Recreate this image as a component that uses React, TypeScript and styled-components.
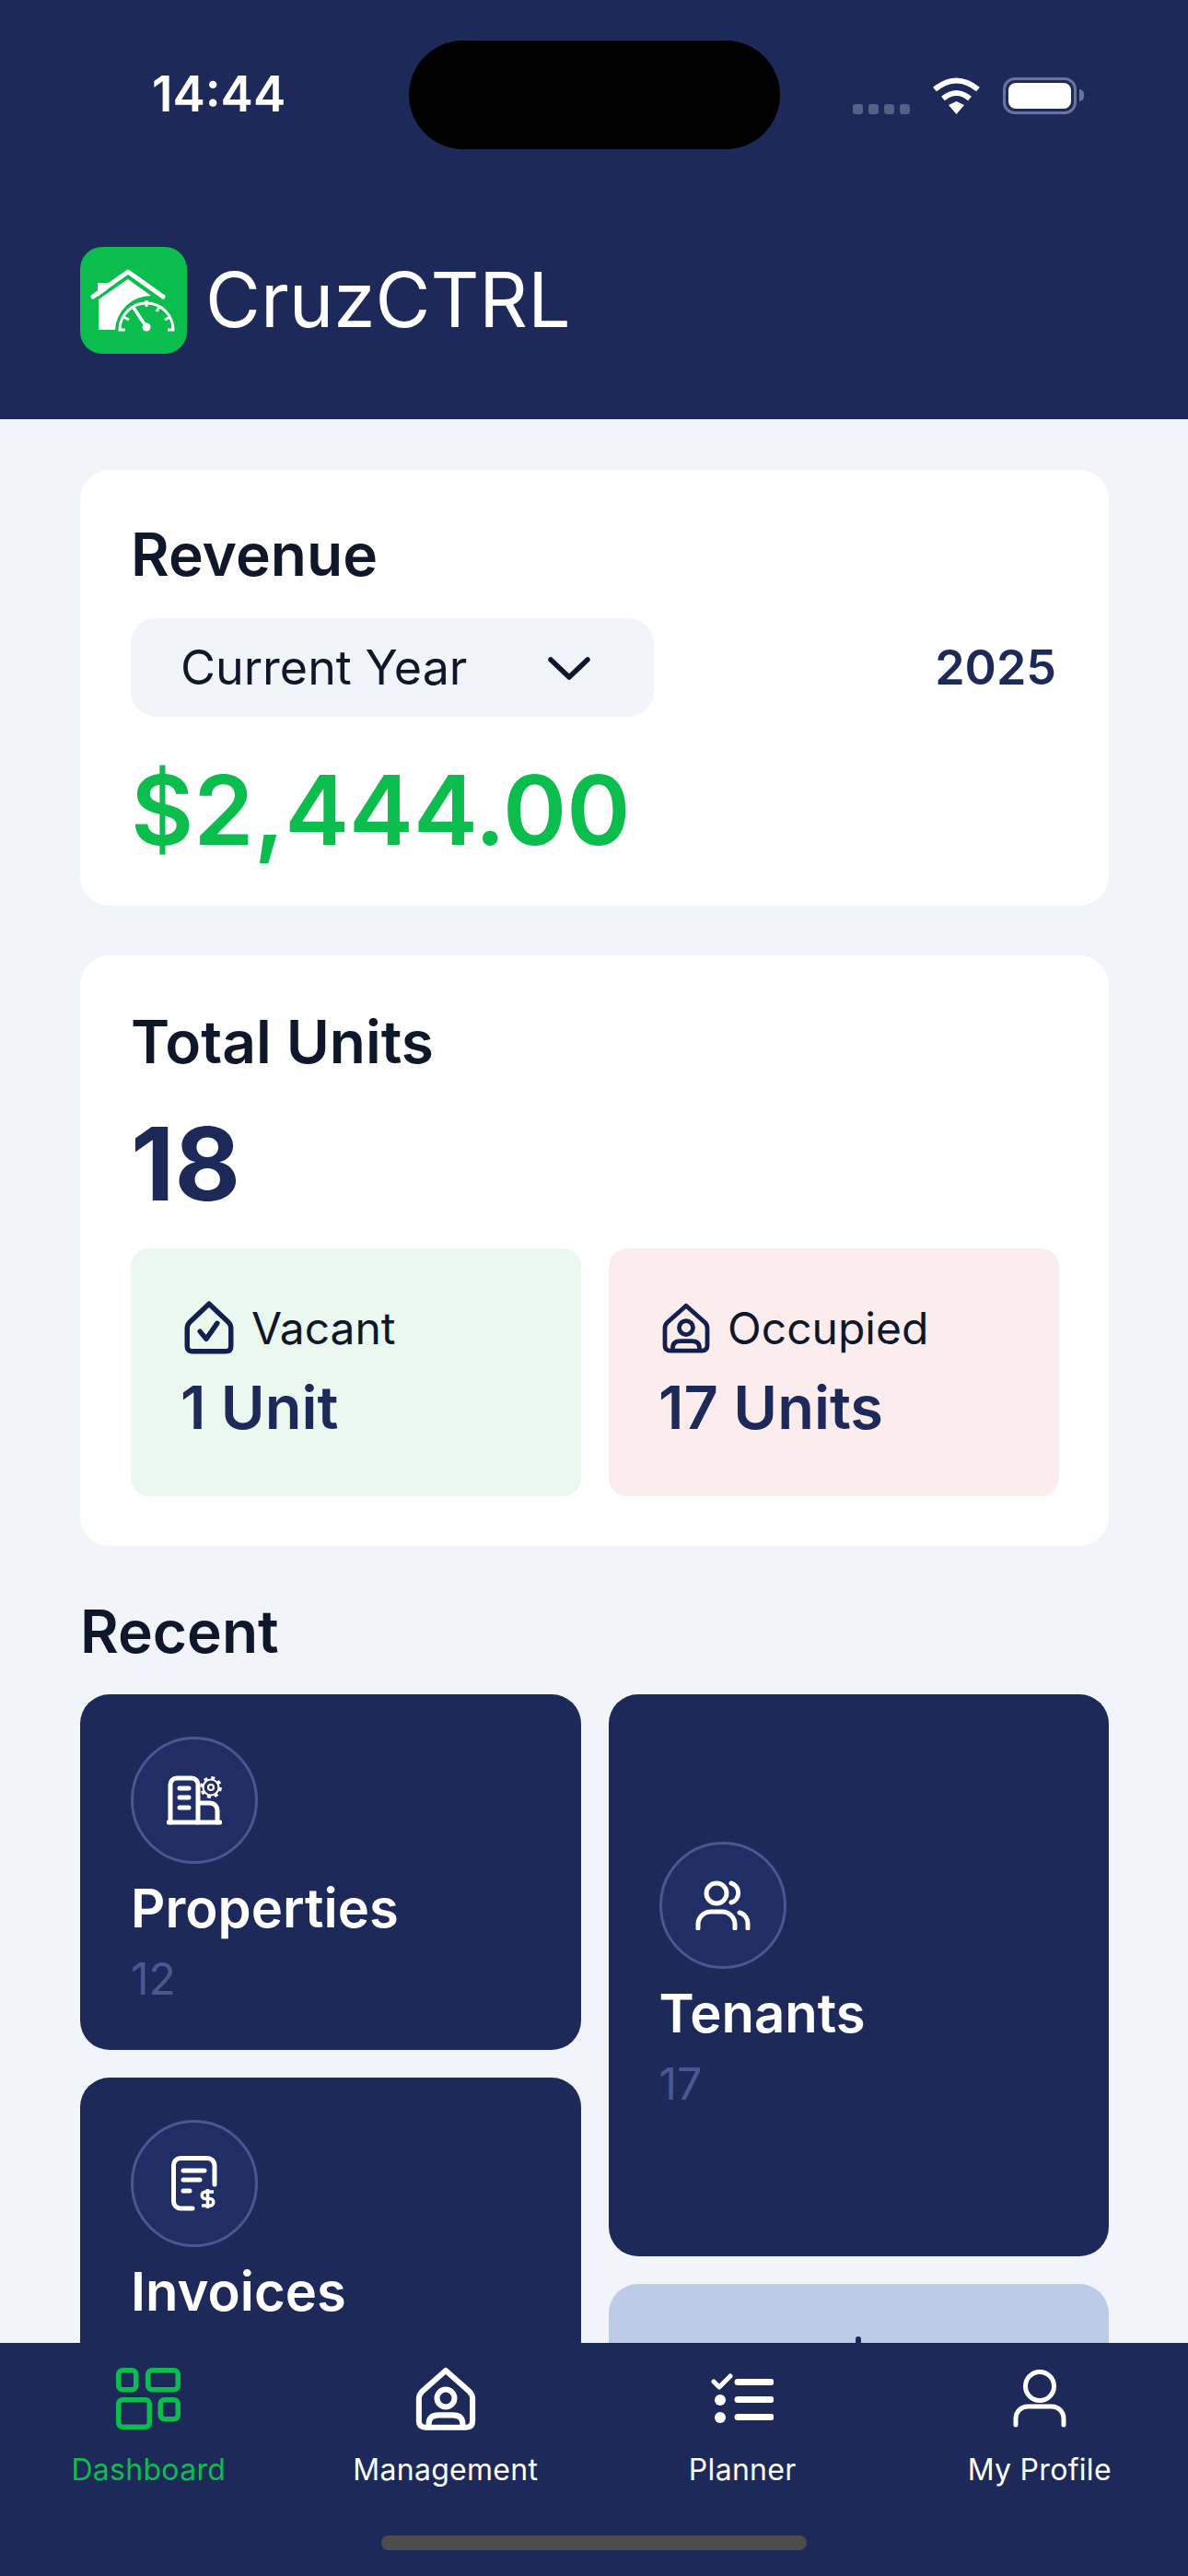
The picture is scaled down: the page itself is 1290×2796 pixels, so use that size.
import React from 'react'
import styled, { createGlobalStyle } from 'styled-components'

const navy = '#1d2959'
const ink = '#0f172a'
const green = '#0abd4c'

const HousePersonIcon: React.FC<{ size: number; color: string }> = ({ size, color }) => (
    <svg width={size} height={size} viewBox="0 0 24 24" fill="none" stroke={color} strokeWidth="1.9" strokeLinejoin="round" strokeLinecap="round">
        <path d="M12 2.5 L20.2 9.8 Q21.2 10.8 21.2 12.2 V19.8 Q21.2 22 18.8 22 H5.2 Q2.8 22 2.8 19.8 V12.2 Q2.8 10.8 3.8 9.8 Z" />
        <circle cx="12" cy="12" r="3" />
        <path d="M6.2 21.6 V20.8 Q6.2 17.8 9.6 17.8 H14.4 Q17.8 17.8 17.8 20.8 V21.6" />
    </svg>
)

const HouseCheckIcon: React.FC<{ size: number; color: string }> = ({ size, color }) => (
    <svg width={size} height={size} viewBox="0 0 24 24" fill="none" stroke={color} strokeWidth="2.1" strokeLinejoin="round" strokeLinecap="round">
        <path d="M12 2 L20.2 9.8 Q21.2 10.8 21.2 12.2 V19.8 Q21.2 22 18.8 22 H5.2 Q2.8 22 2.8 19.8 V12.2 Q2.8 10.8 3.8 9.8 Z" />
        <path d="M8.2 13.6 L10.8 16.8 L15.4 10.2" />
    </svg>
)

const LogoIcon = () => (
    <svg width="116" height="116" viewBox="0 0 116 116">
        <rect width="116" height="116" rx="24" fill={green} />
        <path d="M20 57 L52 35 L77 53 A39 39 0 0 0 38 90 H20 Z" fill="#fff" />
        <path d="M19 39 H30 V46 L19 54 Z" fill="#fff" />
        <path d="M14 54 L52 27 L90 54" fill="none" stroke="#fff" strokeWidth="5" strokeLinecap="round" strokeLinejoin="round" />
        <g fill="none" stroke="#fff" strokeWidth="3">
            <path d="M49 90 H43 A29 29 0 0 1 101 90 H95" />
            <path d="M72 58 V65 M87 64 L83 70 M98 76 L92 79 M47 76 L53 79" />
            <path d="M58 66 L72 87" strokeWidth="3.5" />
        </g>
        <circle cx="72" cy="87" r="4.5" fill="#fff" />
    </svg>
)

const WifiIcon = () => (
    <svg width="53" height="40" viewBox="0 0 53 40" fill="none" stroke="#fff" strokeWidth="6">
        <path d="M3 13 Q26.5 -6 50 13" />
        <path d="M12 23 Q26.5 11 41 23" />
        <path d="M18 30 L26.5 26 L35 30 L26.5 40 Z" fill="#fff" stroke="none" />
    </svg>
)

const ChevronIcon = () => (
    <svg width="48" height="28" viewBox="0 0 48 28" fill="none" stroke={ink} strokeWidth="5.5" strokeLinecap="round" strokeLinejoin="round">
        <path d="M4 5 L24 24 L44 5" />
    </svg>
)

const BuildingIcon = () => (
    <svg width="60" height="54" viewBox="0 0 60 54" fill="none" stroke="#fff" strokeWidth="5" strokeLinecap="round">
        <path d="M4 51 V10 A7 7 0 0 1 11 3 H27 A7 7 0 0 1 34 10 V51" />
        <path d="M2 51 H58" />
        <path d="M14 14 H24 M14 24 H24 M14 35 H24" />
        <path d="M35 30 H47 A8 8 0 0 1 55 38 V51" />
        <g strokeLinecap="butt">
            <circle cx="48" cy="13" r="8.5" strokeWidth="2.2" />
            <circle cx="48" cy="13" r="3" strokeWidth="2.2" />
            <circle cx="48" cy="13" r="10.5" strokeWidth="2.8" strokeDasharray="4 4.25" />
        </g>
    </svg>
)

const PeopleIcon = () => (
    <svg width="60" height="54" viewBox="0 0 60 54" fill="none" stroke="#fff" strokeWidth="5" strokeLinecap="round">
        <circle cx="23" cy="14" r="11" />
        <path d="M39 3 A11 11 0 0 1 39 24" />
        <path d="M3 52 V48 A14 14 0 0 1 17 34 H29 A14 14 0 0 1 43 48 V52" />
        <path d="M48 35 A12 12 0 0 1 57 47 V52" />
    </svg>
)

const InvoiceIcon = () => (
    <svg width="50" height="60" viewBox="0 0 50 60" fill="none" stroke="#fff" strokeWidth="5" strokeLinecap="round">
        <path d="M23 57 H10 A7.5 7.5 0 0 1 2.5 49.5 V10 A7.5 7.5 0 0 1 10 2.5 H39 A8 8 0 0 1 47 10 V31" />
        <path d="M13 16 H36 M13 26 H31 M13 38 H20" />
        <path d="M46 39 H37 A3.5 3.5 0 0 0 37 46.5 H42 A3.5 3.5 0 0 1 42 54 H33 M39.5 36 V57" strokeWidth="3.6" strokeLinecap="butt" />
    </svg>
)

const DashboardIcon = () => (
    <svg width="70" height="67" viewBox="0 0 70 67" fill="none" stroke={green} strokeWidth="5.5">
        <rect x="2.75" y="2.75" width="19" height="21" rx="4.5" />
        <rect x="34.75" y="2.75" width="32.5" height="21" rx="4.5" />
        <rect x="2.75" y="34.75" width="33.5" height="29.5" rx="4.5" />
        <rect x="48.25" y="34.75" width="19" height="21" rx="4.5" />
    </svg>
)

const PlannerIcon = () => (
    <svg width="68" height="54" viewBox="0 0 68 54" fill="none" stroke="#fff" strokeLinecap="round" strokeLinejoin="round">
        <path d="M3 9 L9 15 L21 3" strokeWidth="5" />
        <circle cx="10" cy="29" r="6" fill="#fff" stroke="none" />
        <circle cx="10" cy="48" r="6" fill="#fff" stroke="none" />
        <path d="M29 9.5 H65 M29 28.5 H65 M29 47.5 H65" strokeWidth="7" />
    </svg>
)

const ProfileIcon = () => (
    <svg width="58" height="64" viewBox="0 0 58 64" fill="none" stroke="#fff" strokeWidth="5" strokeLinecap="round">
        <circle cx="29" cy="19" r="15.5" />
        <path d="M3 61 V54 A13 13 0 0 1 16 41 H42 A13 13 0 0 1 55 54 V61" />
    </svg>
)

const PlusIcon = () => (
    <svg width="60" height="60" viewBox="0 0 60 60" fill="none" stroke={navy} strokeWidth="6" strokeLinecap="round">
        <path d="M30 3 V57 M3 30 H57" />
    </svg>
)

const App: React.FC = () => {
    return (
        <Screen>
            <GlobalStyle />
            <Header>
                <StatusBar>
                    <Time>14:44</Time>
                    <Island />
                    <StatusIcons>
                        <SignalDots>
                            <i /><i /><i /><i />
                        </SignalDots>
                        <WifiIcon />
                        <Battery>
                            <span />
                        </Battery>
                    </StatusIcons>
                </StatusBar>
                <Brand>
                    <LogoIcon />
                    <BrandName>CruzCTRL</BrandName>
                </Brand>
            </Header>

            <Content>
                <RevenueCard>
                    <CardTitle>Revenue</CardTitle>
                    <PeriodRow>
                        <PeriodSelect>
                            Current Year
                            <ChevronIcon />
                        </PeriodSelect>
                        <Year>2025</Year>
                    </PeriodRow>
                    <Amount>$2,444.00</Amount>
                </RevenueCard>

                <UnitsCard>
                    <CardTitle>Total Units</CardTitle>
                    <UnitsCount>18</UnitsCount>
                    <UnitBoxes>
                        <UnitBox $tone="#eaf8f0">
                            <UnitLabel>
                                <HouseCheckIcon size={62} color="#12204f" />
                                Vacant
                            </UnitLabel>
                            <UnitValue>1 Unit</UnitValue>
                        </UnitBox>
                        <UnitBox $tone="#fbeded">
                            <UnitLabel>
                                <HousePersonIcon size={60} color="#12204f" />
                                Occupied
                            </UnitLabel>
                            <UnitValue>17 Units</UnitValue>
                        </UnitBox>
                    </UnitBoxes>
                </UnitsCard>

                <SectionTitle>Recent</SectionTitle>
                <RecentGrid>
                    <RecentColumn>
                        <RecentCard $height={386}>
                            <IconCircle><BuildingIcon /></IconCircle>
                            <RecentName>Properties</RecentName>
                            <RecentCount>12</RecentCount>
                        </RecentCard>
                        <RecentCard $height={386}>
                            <IconCircle><InvoiceIcon /></IconCircle>
                            <RecentName>Invoices</RecentName>
                        </RecentCard>
                    </RecentColumn>
                    <RecentColumn>
                        <RecentCard $height={610} $centered>
                            <IconCircle><PeopleIcon /></IconCircle>
                            <RecentName>Tenants</RecentName>
                            <RecentCount>17</RecentCount>
                        </RecentCard>
                        <AddCard>
                            <PlusIcon />
                        </AddCard>
                    </RecentColumn>
                </RecentGrid>
            </Content>

            <BottomNav>
                <NavTabs>
                    <NavTab $active>
                        <NavIcon><DashboardIcon /></NavIcon>
                        Dashboard
                    </NavTab>
                    <NavTab>
                        <NavIcon><HousePersonIcon size={76} color="#fff" /></NavIcon>
                        Management
                    </NavTab>
                    <NavTab>
                        <NavIcon><PlannerIcon /></NavIcon>
                        Planner
                    </NavTab>
                    <NavTab>
                        <NavIcon><ProfileIcon /></NavIcon>
                        My Profile
                    </NavTab>
                </NavTabs>
                <HomeIndicator />
            </BottomNav>
        </Screen>
    )
}

const GlobalStyle = createGlobalStyle`
    body {
        margin: 0;
        font-family: Inter, "Liberation Sans", sans-serif;
    }
`

const Screen = styled.div`
    width: 1290px;
    height: 2796px;
    display: flex;
    flex-direction: column;
    overflow: hidden;
    background: #f1f4f9;
`

const Header = styled.header`
    height: 455px;
    flex-shrink: 0;
    box-sizing: border-box;
    padding: 44px 87px 0;
    background: ${navy};
    display: flex;
    flex-direction: column;
`

const StatusBar = styled.div`
    height: 118px;
    display: flex;
    align-items: flex-start;
    margin-right: -87px;
    margin-left: 78px;
`

const Time = styled.div`
    width: 279px;
    margin-top: 33px;
    font-size: 53px;
    line-height: 50px;
    font-weight: 600;
    color: #fff;
`

const Island = styled.div`
    width: 403px;
    height: 118px;
    border-radius: 59px;
    background: #000;
`

const StatusIcons = styled.div`
    margin-left: 79px;
    margin-top: 40px;
    display: flex;
    align-items: flex-start;
    gap: 24px;
`

const SignalDots = styled.div`
    display: flex;
    gap: 6px;
    margin-top: 29px;

    i {
        width: 11px;
        height: 11px;
        border-radius: 3px;
        background: #566085;
    }
`

const Battery = styled.div`
    position: relative;
    width: 80px;
    height: 40px;
    box-sizing: border-box;
    padding: 3px;
    border: 3px solid #6a7498;
    border-radius: 13px;

    span {
        display: block;
        height: 100%;
        border-radius: 8px;
        background: #fff;
    }

    &::after {
        content: '';
        position: absolute;
        right: -11px;
        top: 10px;
        width: 5px;
        height: 13px;
        border-radius: 0 5px 5px 0;
        background: #6a7498;
    }
`

const Brand = styled.div`
    margin-top: 106px;
    display: flex;
    align-items: center;
    gap: 20px;
`

const BrandName = styled.div`
    font-size: 82px;
    line-height: 100px;
    font-weight: 400;
    color: #fff;
`

const Content = styled.main`
    flex: 1;
    min-height: 0;
    overflow: hidden;
    box-sizing: border-box;
    padding: 55px 86px 0 87px;
    display: flex;
    flex-direction: column;
`

const Card = styled.section`
    box-sizing: border-box;
    flex-shrink: 0;
    padding: 55px 55px 0;
    background: #fff;
    border-radius: 32px;
`

const RevenueCard = styled(Card)`
    height: 473px;
    padding-top: 56px;
    margin-bottom: 54px;
`

const UnitsCard = styled(Card)`
    height: 641px;
    padding-top: 58px;
    padding-right: 54px;
`

const CardTitle = styled.h2`
    margin: 0;
    font-size: 64px;
    line-height: 72px;
    font-weight: 600;
    color: ${ink};
`

const PeriodRow = styled.div`
    margin-top: 33px;
    display: flex;
    align-items: center;
    justify-content: space-between;
`

const PeriodSelect = styled.div`
    width: 568px;
    height: 107px;
    box-sizing: border-box;
    padding: 0 68px 0 54px;
    display: flex;
    align-items: center;
    justify-content: space-between;
    background: #f1f4f9;
    border-radius: 28px;
    font-size: 52px;
    color: ${ink};
`

const Year = styled.div`
    margin-right: 2px;
    font-size: 52px;
    font-weight: 600;
    color: ${navy};
`

const Amount = styled.div`
    margin-top: 36px;
    font-size: 105px;
    line-height: 130px;
    font-weight: 600;
    color: ${green};
`

const UnitsCount = styled.div`
    margin-top: 31px;
    font-size: 110px;
    line-height: 130px;
    font-weight: 700;
    color: ${navy};
`

const UnitBoxes = styled.div`
    margin-top: 27px;
    display: grid;
    grid-template-columns: 1fr 1fr;
    gap: 30px;
`

const UnitBox = styled.div<{ $tone: string }>`
    height: 269px;
    box-sizing: border-box;
    padding: 55px 54px 0;
    background: ${(p) => p.$tone};
    border-radius: 20px;
`

const UnitLabel = styled.div`
    display: flex;
    align-items: center;
    gap: 15px;
    height: 62px;
    font-size: 48px;
    color: ${ink};
`

const UnitValue = styled.div`
    margin-top: 17px;
    font-size: 65px;
    line-height: 78px;
    font-weight: 600;
    color: ${navy};
`

const SectionTitle = styled.h2`
    margin: 57px 0 32px;
    flex-shrink: 0;
    font-size: 64px;
    line-height: 72px;
    font-weight: 600;
    color: ${ink};
`

const RecentGrid = styled.div`
    display: grid;
    grid-template-columns: 1fr 1fr;
    gap: 30px;
    align-items: start;
`

const RecentColumn = styled.div`
    display: flex;
    flex-direction: column;
    gap: 30px;
`

const RecentCard = styled.article<{ $height: number; $centered?: boolean }>`
    height: ${(p) => p.$height}px;
    box-sizing: border-box;
    padding: ${(p) => (p.$centered ? '0' : '46px')} 55px 0;
    display: flex;
    flex-direction: column;
    justify-content: ${(p) => (p.$centered ? 'center' : 'flex-start')};
    background: ${navy};
    border-radius: 32px;
`

const IconCircle = styled.div`
    width: 138px;
    height: 138px;
    box-sizing: border-box;
    display: flex;
    align-items: center;
    justify-content: center;
    background: #212e65;
    border: 3px solid #4a5890;
    border-radius: 50%;
`

const RecentName = styled.div`
    margin-top: 13px;
    font-size: 58px;
    line-height: 70px;
    font-weight: 600;
    color: #fff;
`

const RecentCount = styled.div`
    margin-top: 14px;
    font-size: 48px;
    line-height: 56px;
    color: #4a5890;
`

const AddCard = styled.div`
    height: 300px;
    box-sizing: border-box;
    padding-top: 57px;
    display: flex;
    justify-content: center;
    background: #bccce8;
    border-radius: 32px;
`

const BottomNav = styled.nav`
    height: 253px;
    flex-shrink: 0;
    box-sizing: border-box;
    padding-top: 24px;
    background: ${navy};
    display: flex;
    flex-direction: column;
    align-items: center;
`

const NavTabs = styled.div`
    align-self: stretch;
    display: grid;
    grid-template-columns: repeat(4, 1fr);
`

const NavTab = styled.div<{ $active?: boolean }>`
    display: flex;
    flex-direction: column;
    align-items: center;
    font-size: 32px;
    line-height: 40px;
    letter-spacing: 0.3px;
    color: ${(p) => (p.$active ? green : '#fff')};
`

const NavIcon = styled.div`
    height: 72px;
    margin-bottom: 22px;
    display: flex;
    align-items: center;
    justify-content: center;
`

const HomeIndicator = styled.div`
    width: 462px;
    height: 16px;
    margin-top: 51px;
    border-radius: 8px;
    background: #4d4d4d;
`

export default App
